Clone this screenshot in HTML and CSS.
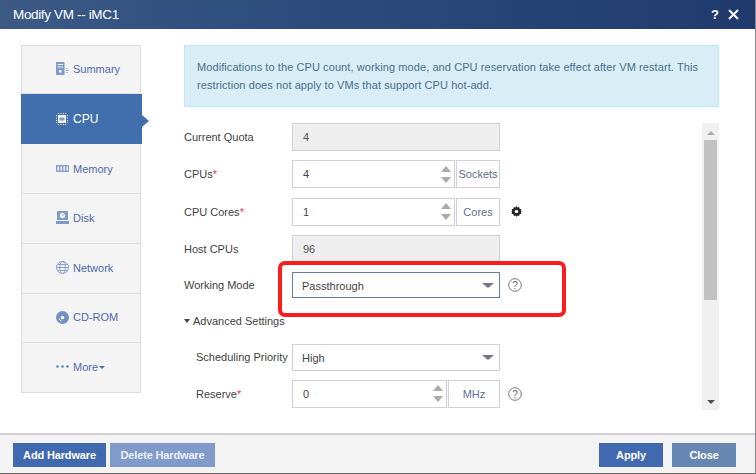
FILE: index.html
```html
<!DOCTYPE html>
<html lang="en">
<head>
<meta charset="utf-8">
<title>Modify VM</title>
<link rel="stylesheet" href="styles.css">
</head>
<body>
<div class="dialog">
  <header class="titlebar">
    <span class="title">Modify VM -- iMC1</span>
    <span class="title-actions">
      <span class="help">?</span>
      <svg class="close-x" width="11" height="11" viewBox="0 0 11 11"><path d="M1 1l9 9M10 1l-9 9" stroke="#fff" stroke-width="2" fill="none"/></svg>
    </span>
  </header>
  <div class="content">
    <nav class="sidebar">
      <a class="nav-item"><span class="nav-inner">
        <svg class="nav-icon" width="13" height="13" viewBox="0 0 13 13"><path fill="#7f9ac6" d="M0 0h8.500v13H0z"/><path fill="#f4f4f4" d="M1.500 2h5.500v1H1.500zM1.500 4.500h5.500v1H1.500zM3 8h2.500v2.500H3z"/><path fill="#b5c5de" d="M9.500 6h2v1h-2zM9.500 8h3.500v1H9.500zM9.500 10h2.500v1H9.500z"/></svg>
        <span>Summary</span></span></a>
      <a class="nav-item active"><span class="nav-inner">
        <svg class="nav-icon" width="12" height="12" viewBox="0 0 12 12"><path fill="#fff" d="M2 2h8v8H2zM0 2h1v1H0zM0 4.500h1v1H0zM0 7h1v1H0zM0 9h1v1H0zM11 2h1v1h-1zM11 4.500h1v1h-1zM11 7h1v1h-1zM11 9h1v1h-1zM2 0h1v1H2zM4.500 0h1v1h-1zM7 0h1v1H7zM9 0h1v1H9zM2 11h1v1H2zM4.500 11h1v1h-1zM7 11h1v1H7zM9 11h1v1H9z"/><path fill="#7f9ac6" d="M3.500 4.500h5v3h-5z"/></svg>
        <span>CPU</span></span></a>
      <a class="nav-item mem"><span class="nav-inner">
        <svg class="nav-icon" width="13" height="9" viewBox="0 0 13 9"><path fill="#8aa2c9" d="M0 1h13v7H0z"/><path fill="#f4f4f4" d="M1.500 2.500h1.500v4H1.500zM4.500 2.500h1.500v4H4.500zM7.500 2.500h1.500v4H7.500zM10.500 2.500h1.500v4h-1.500z"/></svg>
        <span>Memory</span></span></a>
      <a class="nav-item"><span class="nav-inner">
        <svg class="nav-icon" width="13" height="13" viewBox="0 0 13 13"><path fill="#7f9ac6" d="M2 0h9a1 1 0 0 1 1 1v8H1V1a1 1 0 0 1 1-1zM0 10h13v3H0z"/><circle cx="6.500" cy="4.500" r="2.700" fill="#f4f4f4"/><path d="M6.500 4.500l2-1.500" stroke="#7f9ac6"/></svg>
        <span>Disk</span></span></a>
      <a class="nav-item"><span class="nav-inner">
        <svg class="nav-icon" width="13" height="13" viewBox="0 0 13 13" fill="none" stroke="#8aa2c9"><circle cx="6.500" cy="6.500" r="6"/><ellipse cx="6.500" cy="6.500" rx="2.800" ry="6"/><path d="M.5 6.500h12M1.500 3.500h10M1.500 9.500h10"/></svg>
        <span>Network</span></span></a>
      <a class="nav-item"><span class="nav-inner">
        <svg class="nav-icon" width="13" height="13" viewBox="0 0 13 13"><circle cx="6.500" cy="6.500" r="6.500" fill="#7391c0"/><circle cx="6.500" cy="6.500" r="1.800" fill="#f4f4f4"/><path d="M3 7.500a4 4 0 0 0 2.500 2.500" stroke="#f4f4f4" fill="none"/></svg>
        <span>CD-ROM</span></span></a>
      <a class="nav-item"><span class="nav-inner">
        <svg class="nav-icon" width="13" height="3" viewBox="0 0 13 3"><circle cx="1.500" cy="1.500" r="1.200" fill="#4a80c8"/><circle cx="6.500" cy="1.500" r="1.200" fill="#4a80c8"/><circle cx="11.500" cy="1.500" r="1.200" fill="#4a80c8"/></svg>
        <span>More</span><i class="more-caret"></i></span></a>
    </nav>
    <main class="panel">
      <div class="notice">Modifications to the CPU count, working mode, and CPU reservation take effect after VM restart. This restriction does not apply to VMs that support CPU hot-add.</div>
      <div class="scroller">
        <form class="form">
          <div class="row">
            <label class="label">Current Quota</label>
            <div class="field readonly">4</div>
          </div>
          <div class="row">
            <label class="label">CPUs<em>*</em></label>
            <div class="combo">
              <div class="field spin"><span>4</span><span class="arrows"><i class="up"></i><i class="down"></i></span></div>
              <div class="unit">Sockets</div>
            </div>
          </div>
          <div class="row">
            <label class="label">CPU Cores<em>*</em></label>
            <div class="combo">
              <div class="field spin"><span>1</span><span class="arrows"><i class="up"></i><i class="down"></i></span></div>
              <div class="unit">Cores</div>
            </div>
            <svg class="gear" width="11" height="11" viewBox="0 0 12 12"><path fill="#222" d="M6 0l1 1.700 1.900-.6.400 2 2 .4-.6 1.900L12 6l-1.300.6.600 1.900-2 .4-.4 2-1.900-.6L6 12l-1-1.700-1.900.6-.4-2-2-.4.600-1.900L0 6l1.300-.6-.6-1.900 2-.4.400-2 1.900.6z"/><circle cx="6" cy="6" r="2" fill="#fff"/></svg>
          </div>
          <div class="row">
            <label class="label">Host CPUs</label>
            <div class="field readonly">96</div>
          </div>
          <div class="row short">
            <label class="label">Working Mode</label>
            <div class="field select focus"><span>Passthrough</span><i class="select-caret"></i></div>
            <svg class="hint" width="14" height="14" viewBox="0 0 14 14"><circle cx="7" cy="7" r="6.300" fill="none" stroke="#777"/><text x="7" y="10.500" text-anchor="middle" class="hint-q">?</text></svg>
          </div>
          <div class="advanced"><i class="adv-caret"></i>Advanced Settings</div>
          <div class="row short sub">
            <label class="label">Scheduling Priority</label>
            <div class="field select"><span>High</span><i class="select-caret"></i></div>
          </div>
          <div class="row sub">
            <label class="label">Reserve<em>*</em></label>
            <div class="combo">
              <div class="field spin narrow"><span>0</span><span class="arrows"><i class="up"></i><i class="down"></i></span></div>
              <div class="unit wide">MHz</div>
            </div>
            <svg class="hint" width="14" height="14" viewBox="0 0 14 14"><circle cx="7" cy="7" r="6.300" fill="none" stroke="#777"/><text x="7" y="10.500" text-anchor="middle" class="hint-q">?</text></svg>
          </div>
        </form>
        <div class="scrollbar">
          <i class="sb-up"></i>
          <div class="sb-track"><div class="sb-thumb"></div></div>
          <i class="sb-down"></i>
        </div>
      </div>
    </main>
    <div class="annotation"></div>
  </div>
  <footer class="footer">
    <div class="btn-group">
      <button class="btn primary wide-a" type="button">Add Hardware</button>
      <button class="btn disabled wide-b" type="button">Delete Hardware</button>
    </div>
    <div class="btn-group right">
      <button class="btn primary small" type="button">Apply</button>
      <button class="btn muted small" type="button">Close</button>
    </div>
  </footer>
</div>
</body>
</html>
```
FILE: styles.css
```css
* { box-sizing: border-box; }
html, body { margin: 0; padding: 0; }
body { width: 756px; height: 474px; overflow: hidden; background: #fff; font-family: "Liberation Sans", Arial, sans-serif; font-size: 11px; color: #444; }
.dialog { width: 756px; height: 474px; display: flex; flex-direction: column; border-right: 1px solid #888; border-bottom: 1px solid #666; }
.titlebar { height: 29px; flex: none; display: flex; align-items: center; justify-content: space-between; padding: 0 16px 0 13px; color: #fff; background: linear-gradient(90deg, #3d5a85 0%, #2f4f7f 30%, #213a6d 100%); }
.title { font-size: 13.500px; letter-spacing: -.35px; }
.title-actions { display: flex; align-items: center; gap: 9px; }
.help { font-size: 13px; font-weight: bold; }
.close-x { display: block; }
.content { flex: 1; position: relative; display: flex; padding: 16px 36px 0 21px; min-height: 0; }
.sidebar { width: 120px; height: 348px; flex: none; display: grid; grid-template-rows: 48px 50px 50px 50px 50px 49px 49px; border: 1px solid #ddd; background: #f4f4f4; }
.nav-item { display: flex; align-items: center; padding-left: 34px; padding-bottom: 2px; position: relative; color: #4f6aa9; border-bottom: 1px solid #ddd; }
.nav-item.mem { padding-bottom: 0; }
.nav-item:last-child { border-bottom: 0; }
.nav-inner { display: flex; align-items: center; gap: 4px; }
.nav-item.active { background: #416fae; color: #fff; margin: 0 -2px 0 -1px; padding: 0 0 0 35px; border-bottom: 0; font-size: 12px; }
.nav-item.active .nav-inner { gap: 5px; }
.nav-item.active::after { content: ""; position: absolute; right: -7px; top: 21px; border-left: 7px solid #416fae; border-top: 6px solid transparent; border-bottom: 6px solid transparent; }
.nav-icon { display: block; flex: none; }
.more-caret { border-top: 3px solid #4f6aa9; border-left: 3.500px solid transparent; border-right: 3.500px solid transparent; margin-left: -3px; margin-top: 2px; }
.panel { flex: 1; margin-left: 43px; display: flex; flex-direction: column; min-width: 0; }
.notice { height: 62px; flex: none; padding: 12px 12px; background: #d9edf7; border: 1px solid #bce8f1; color: #4a6d8c; line-height: 18px; font-size: 11px; letter-spacing: .08px; }
.scroller { margin-top: 16px; height: 287px; display: flex; justify-content: space-between; overflow: hidden; }
.form { width: 500px; display: flex; flex-direction: column; gap: 9.250px; }
.row { height: 28px; display: flex; align-items: center; flex: none; }
.row.short { height: 26.400px; }
.label { width: 108px; flex: none; color: #3f3f3f; white-space: nowrap; }
.label em { color: #f3334f; font-style: normal; }
.row.sub .label { padding-left: 12px; }
.field { width: 208px; height: 100%; flex: none; display: flex; align-items: center; padding-left: 10px; border: 1px solid #cdcfdc; background: #fff; color: #444; }
.field.readonly { background: #eee; color: #555; }
.combo { width: 208px; height: 100%; display: flex; justify-content: space-between; flex: none; }
.spin { width: 163px; justify-content: space-between; padding-right: 3px; }
.spin.narrow { width: 155px; }
.unit { width: 44px; display: flex; align-items: center; justify-content: center; border: 1px solid #cdcfdc; color: #5f6f88; }
.unit.wide { width: 52px; }
.arrows { display: flex; flex-direction: column; gap: 5px; }
.arrows i { display: block; border-left: 5px solid transparent; border-right: 5px solid transparent; }
.arrows .up { border-bottom: 6px solid #aaa; }
.arrows .down { border-top: 6px solid #aaa; }
.select { justify-content: space-between; padding: 1px 4px 0 9px; }
.focus { border-color: #5f7ba6; }
.select-caret { border-top: 5px solid #778; border-left: 6px solid transparent; border-right: 6px solid transparent; margin-right: 1px; }
.gear { margin: 0 0 1px 11px; flex: none; }
.hint { margin-left: 8px; flex: none; }
.hint-q { font-size: 10px; fill: #666; font-family: "Liberation Sans", Arial, sans-serif; }
.advanced { height: 13px; margin-top: 7px; margin-bottom: 7.400px; display: flex; align-items: center; color: #3f3f3f; }
.adv-caret { border-top: 4px solid #444; border-left: 3px solid transparent; border-right: 3px solid transparent; margin-right: 3px; }
.scrollbar { width: 17px; flex: none; background: #f0f0f0; display: flex; flex-direction: column; align-items: center; padding: 8px 0 6px; }
.sb-up { border-bottom: 4px solid #aaa; border-left: 4px solid transparent; border-right: 4px solid transparent; }
.sb-down { border-top: 4px solid #505050; border-left: 4px solid transparent; border-right: 4px solid transparent; }
.sb-track { flex: 1; width: 13px; padding-top: 5px; }
.sb-thumb { height: 160px; background: #c1c1c1; }
.annotation { position: absolute; left: 278px; top: 232px; width: 288px; height: 56px; border: 4px solid #fb1c1c; border-radius: 7px; pointer-events: none; }
.footer { height: 40px; flex: none; display: flex; justify-content: space-between; padding: 8px 19px 0 13px; background: #f3f3f3; border-top: 2px solid #cdcdd8; }
.btn-group { display: flex; gap: 4px; }
.btn-group.right { gap: 9px; }
.btn { height: 24px; border: 0; padding: 0; color: #fff; font: bold 11px "Liberation Sans", Arial, sans-serif; letter-spacing: -.15px; }
.primary { background: #4169af; }
.disabled { background: #809bca; color: #eef; }
.muted { background: #6886b2; }
.wide-a { width: 93px; }
.wide-b { width: 105px; }
.small { width: 64px; }
```
